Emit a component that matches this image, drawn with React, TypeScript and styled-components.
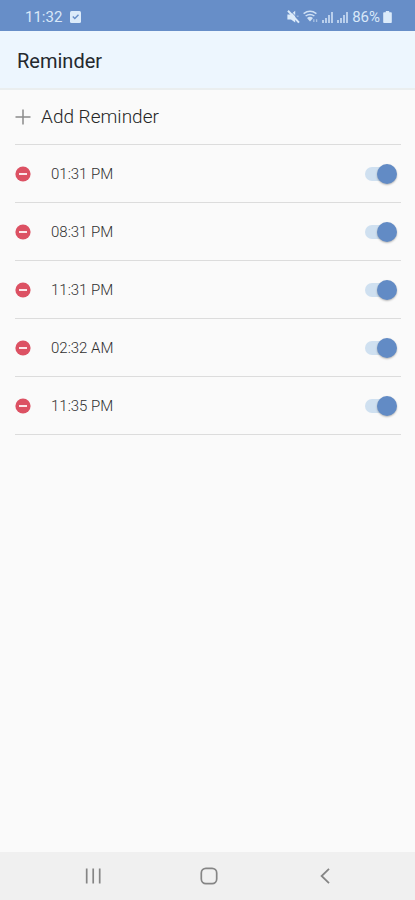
import React, { useState } from "react";
import styled, { createGlobalStyle } from "styled-components";

const GlobalStyle = createGlobalStyle`
  *, *::before, *::after { box-sizing: border-box; }
  body {
    margin: 0;
    background: #fafafa;
    font-family: Roboto, "Liberation Sans", sans-serif;
  }
`;

const Screen = styled.div`
  min-height: 100vh;
  display: flex;
  flex-direction: column;
  background: #fafafa;
`;

const StatusBar = styled.div`
  height: 31px;
  padding: 2px 23px 0 25px;
  display: flex;
  align-items: center;
  justify-content: space-between;
  background: #678ec8;
  color: #d9e8f8;
  font-size: 15px;
  line-height: 20px;
`;

const StatusGroup = styled.div<{ $gap: number }>`
  display: flex;
  align-items: center;
  gap: ${(p) => p.$gap}px;
`;

const BatteryLevel = styled.span`
  display: flex;
  align-items: center;
  gap: 3px;
`;

const Header = styled.header`
  height: 59px;
  padding: 2px 17px 0;
  display: flex;
  align-items: center;
  background: #edf6fe;
  border-bottom: 2px solid #eaeeef;
`;

const Title = styled.h1`
  margin: 0;
  font-size: 20px;
  line-height: 24px;
  font-weight: 400;
  color: #25292e;
`;

const Content = styled.main`
  flex: 1;
  padding: 0 14px 0 15px;
`;

const AddButton = styled.button`
  width: 100%;
  height: 54px;
  padding: 0;
  border: 0;
  display: flex;
  align-items: center;
  gap: 10px;
  background: none;
  font-family: inherit;
  font-size: 19px;
  font-weight: 300;
  line-height: 24px;
  color: #262626;
  cursor: pointer;
`;

const List = styled.ul`
  margin: 0;
  padding: 0;
  list-style: none;
  border-top: 1px solid #dcdcdc;
`;

const Row = styled.li`
  height: 58px;
  padding-right: 4px;
  display: flex;
  align-items: center;
  gap: 20px;
  border-bottom: 1px solid #dcdcdc;
`;

const RemoveButton = styled.button`
  width: 16px;
  height: 16px;
  padding: 0;
  border: 0;
  display: flex;
  background: none;
  cursor: pointer;
`;

const TimeLabel = styled.label`
  flex: 1;
  font-size: 15px;
  font-weight: 300;
  line-height: 20px;
  color: #303030;
`;

const Toggle = styled.input`
  appearance: none;
  width: 32px;
  height: 20px;
  margin: 0;
  display: grid;
  align-items: center;
  cursor: pointer;

  &::before,
  &::after {
    content: "";
    grid-area: 1 / 1;
  }
  &::before {
    width: 28px;
    height: 14px;
    border-radius: 7px;
    background: #dcdcdc;
  }
  &::after {
    width: 20px;
    height: 20px;
    border-radius: 50%;
    background: #f4f4f4;
    box-shadow: 0 1px 2px rgba(0, 0, 0, 0.28);
  }
  &:checked::before {
    background: #cfe0f0;
  }
  &:checked::after {
    justify-self: end;
    background: #628bc5;
  }
`;

const NavBar = styled.nav`
  height: 48px;
  padding: 0 32px 0 35px;
  display: grid;
  grid-template-columns: repeat(3, 1fr);
  background: #f0f0f0;
`;

const NavButton = styled.button`
  padding: 0;
  border: 0;
  display: flex;
  align-items: center;
  justify-content: center;
  background: none;
  color: #858585;
  cursor: pointer;
`;

const TaskIcon = () => (
  <svg width="11" height="14" viewBox="0 0 11 14" aria-hidden="true">
    <rect y="1" width="11" height="12" rx="1.5" fill="#dcebfa" />
    <path d="M2.8 6.6 4.8 8.6 8.5 4.8" fill="none" stroke="#678ec8" strokeWidth="1.4" />
  </svg>
);

const MuteIcon = () => (
  <svg width="13" height="14" viewBox="0 0 13 14" aria-hidden="true">
    <path d="M0.4 4.4H3.8L8.2 0.8V12.4L4 9.4H0.4Z" fill="#dcebfa" />
    <path d="M9.6 6.2H11.6" stroke="#a9c2e4" strokeWidth="1.1" />
    <path d="M4.2 1.6 12.6 10.4" stroke="#678ec8" strokeWidth="1" />
    <path d="M1 0.8 12 12.6" stroke="#dcebfa" strokeWidth="2" />
  </svg>
);

const WifiIcon = () => (
  <svg width="16" height="14" viewBox="0 0 16 14" aria-hidden="true">
    <g fill="none" stroke="#d0e1f5" strokeWidth="1.5">
      <path d="M0.6 3.6Q7 -1 13.4 3.6" />
      <path d="M2.6 6Q7 2.8 11.4 6" />
    </g>
    <path d="M4 8Q7 5.6 10 8L7 11.6Z" fill="#d0e1f5" />
    <path d="M10.8 9.2V12M13.6 9.2V12" stroke="#a9c2e4" strokeWidth="1.3" />
  </svg>
);

const SignalIcon = () => (
  <svg width="12" height="14" viewBox="0 0 12 14" aria-hidden="true">
    <g fill="#b9cfec">
      <rect x="0" y="10" width="2" height="3" />
      <rect x="3" y="8" width="2" height="5" />
      <rect x="6" y="5" width="2" height="8" />
      <rect x="9" y="2" width="2" height="11" />
    </g>
  </svg>
);

const BatteryIcon = () => (
  <svg width="9" height="14" viewBox="0 0 9 14" aria-hidden="true">
    <path d="M2.8 1H6.2V2.2H8A0.8 0.8 0 0 1 8.8 3V12.2A0.8 0.8 0 0 1 8 13H1A0.8 0.8 0 0 1 0.2 12.2V3A0.8 0.8 0 0 1 1 2.2H2.8Z" fill="#dcebfa" />
  </svg>
);

const PlusIcon = () => (
  <svg width="16" height="16" viewBox="0 0 16 16" aria-hidden="true">
    <path d="M8 0.5V15.5M0.5 8H15.5" stroke="#8b8b8b" strokeWidth="1.5" />
  </svg>
);

const MinusIcon = () => (
  <svg width="16" height="16" viewBox="0 0 16 16" aria-hidden="true">
    <circle cx="8" cy="8" r="7.6" fill="#dc5163" />
    <path d="M4 8H12" stroke="#fbe6e9" strokeWidth="2" />
  </svg>
);

const RecentsIcon = () => (
  <svg width="17" height="16" viewBox="0 0 17 16" aria-hidden="true">
    <path d="M1.7 0.5V15.5M8.2 0.5V15.5M14.7 0.5V15.5" stroke="currentColor" strokeWidth="1.7" />
  </svg>
);

const HomeIcon = () => (
  <svg width="18" height="18" viewBox="0 0 18 18" aria-hidden="true">
    <rect x="1.3" y="1.3" width="15.4" height="15.4" rx="4.6" fill="none" stroke="currentColor" strokeWidth="1.7" />
  </svg>
);

const BackIcon = () => (
  <svg width="10" height="16" viewBox="0 0 10 16" aria-hidden="true">
    <path d="M9 0.8 1.6 8 9 15.2" fill="none" stroke="currentColor" strokeWidth="1.8" />
  </svg>
);

const initialTimes = ["01:31 PM", "08:31 PM", "11:31 PM", "02:32 AM", "11:35 PM"];

export default function App() {
  const [times, setTimes] = useState(initialTimes);

  return (
    <>
      <GlobalStyle />
      <Screen>
        <StatusBar>
          <StatusGroup $gap={8}>
            <span>11:32</span>
            <TaskIcon />
          </StatusGroup>
          <StatusGroup $gap={3}>
            <MuteIcon />
            <WifiIcon />
            <SignalIcon />
            <SignalIcon />
            <BatteryLevel>
              86%
              <BatteryIcon />
            </BatteryLevel>
          </StatusGroup>
        </StatusBar>
        <Header>
          <Title>Reminder</Title>
        </Header>
        <Content>
          <AddButton type="button">
            <PlusIcon />
            Add Reminder
          </AddButton>
          <List>
            {times.map((time) => {
              const id = `reminder-${time.replace(/\W/g, "-")}`;
              return (
                <Row key={time}>
                  <RemoveButton
                    type="button"
                    aria-label={`Remove ${time}`}
                    onClick={() => setTimes(times.filter((t) => t !== time))}
                  >
                    <MinusIcon />
                  </RemoveButton>
                  <TimeLabel htmlFor={id}>{time}</TimeLabel>
                  <Toggle id={id} type="checkbox" role="switch" defaultChecked />
                </Row>
              );
            })}
          </List>
        </Content>
        <NavBar aria-label="System">
          <NavButton type="button" aria-label="Recent apps">
            <RecentsIcon />
          </NavButton>
          <NavButton type="button" aria-label="Home">
            <HomeIcon />
          </NavButton>
          <NavButton type="button" aria-label="Back">
            <BackIcon />
          </NavButton>
        </NavBar>
      </Screen>
    </>
  );
}
